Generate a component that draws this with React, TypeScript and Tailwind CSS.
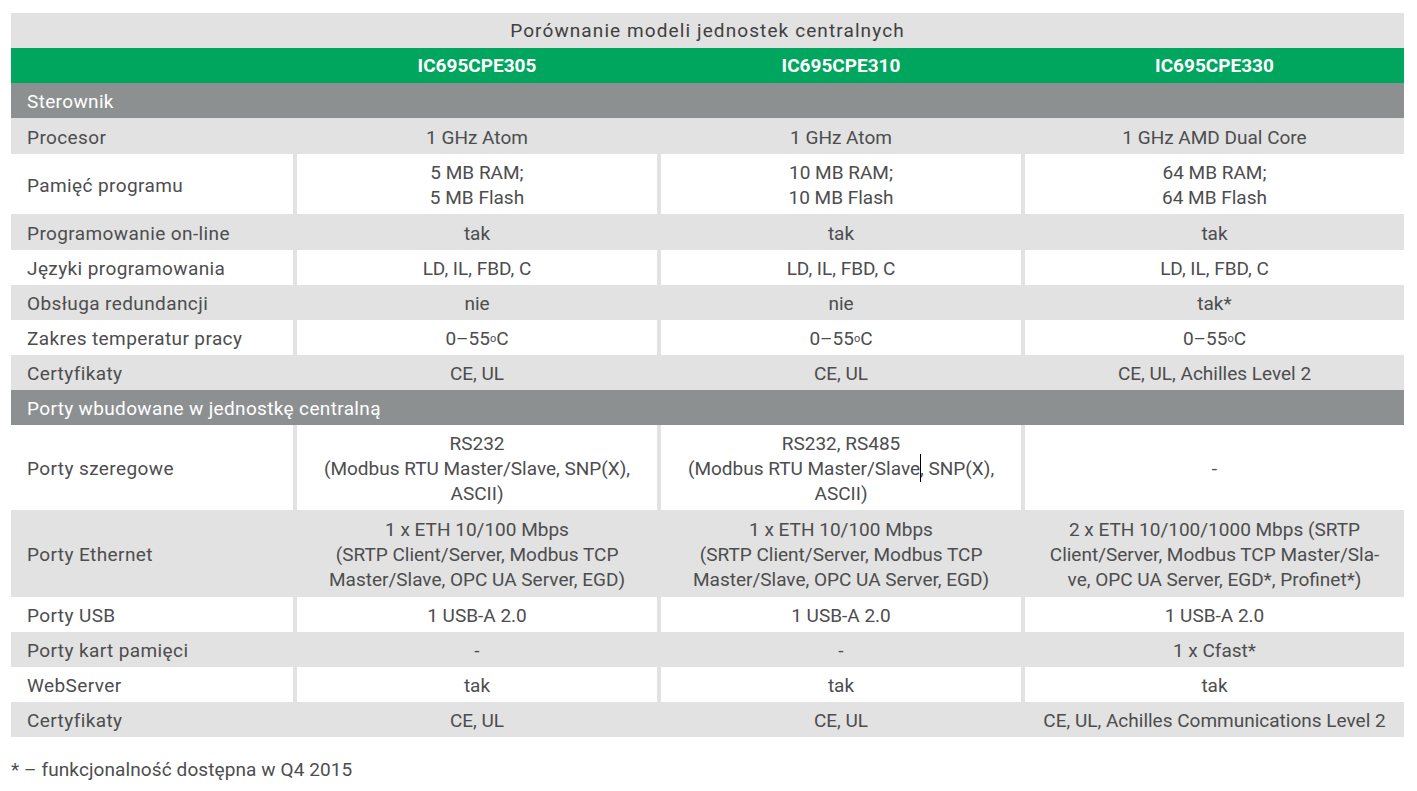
import type { ReactNode } from "react";

// ─── Table data ──────────────────────────────────────────────────────────────
type Row =
  | { kind: "section"; label: string }
  | { kind: "data"; label: string; cells: ReactNode[]; tall?: string };

const Caret = () => (
  <span className="relative">
    <span className="absolute left-0 -top-[3px] w-px h-[28px] bg-black" />
  </span>
);

const rows: Row[] = [
  { kind: "section", label: "Sterownik" },
  { kind: "data", label: "Procesor", cells: ["1 GHz Atom", "1 GHz Atom", "1 GHz AMD Dual Core"], tall: "min-h-[36px]" },
  {
    kind: "data",
    label: "Pamięć programu",
    cells: [
      <>5 MB RAM;<br />5 MB Flash</>,
      <>10 MB RAM;<br />10 MB Flash</>,
      <>64 MB RAM;<br />64 MB Flash</>,
    ],
  },
  { kind: "data", label: "Programowanie on-line", cells: ["tak", "tak", "tak"], tall: "min-h-[36px]" },
  { kind: "data", label: "Języki programowania", cells: ["LD, IL, FBD, C", "LD, IL, FBD, C", "LD, IL, FBD, C"] },
  { kind: "data", label: "Obsługa redundancji", cells: ["nie", "nie", "tak*"] },
  {
    kind: "data",
    label: "Zakres temperatur pracy",
    cells: [0, 1, 2].map((i) => (
      <span key={i}>
        0–55<span className="text-[11px] align-[3px]">o</span>C
      </span>
    )),
  },
  { kind: "data", label: "Certyfikaty", cells: ["CE, UL", "CE, UL", "CE, UL, Achilles Level 2"] },
  { kind: "section", label: "Porty wbudowane w jednostkę centralną" },
  {
    kind: "data",
    label: "Porty szeregowe",
    cells: [
      <>RS232<br />(Modbus RTU Master/Slave, SNP(X),<br />ASCII)</>,
      <>RS232, RS485<br />(Modbus RTU Master/Slave<Caret />, SNP(X),<br />ASCII)</>,
      "-",
    ],
  },
  {
    kind: "data",
    label: "Porty Ethernet",
    tall: "min-h-[87px]",
    cells: [
      <>1 x ETH 10/100 Mbps<br />(SRTP Client/Server, Modbus TCP<br />Master/Slave, OPC UA Server, EGD)</>,
      <>1 x ETH 10/100 Mbps<br />(SRTP Client/Server, Modbus TCP<br />Master/Slave, OPC UA Server, EGD)</>,
      <>2 x ETH 10/100/1000 Mbps (SRTP<br />Client/Server, Modbus TCP Master/Sla-<br />ve, OPC UA Server, EGD*, Profinet*)</>,
    ],
  },
  { kind: "data", label: "Porty USB", cells: ["1 USB-A 2.0", "1 USB-A 2.0", "1 USB-A 2.0"] },
  { kind: "data", label: "Porty kart pamięci", cells: ["-", "-", "1 x Cfast*"] },
  { kind: "data", label: "WebServer", cells: ["tak", "tak", "tak"] },
  { kind: "data", label: "Certyfikaty", cells: ["CE, UL", "CE, UL", "CE, UL, Achilles Communications Level 2"] },
];

const models = ["IC695CPE305", "IC695CPE310", "IC695CPE330"];

const gridCols = "grid grid-cols-[282px_360px_360px_379px] gap-x-1";

// ─── Main component ──────────────────────────────────────────────────────────
export default function App() {
  let dataIdx = 0;

  return (
    <div
      className="min-h-screen bg-white pt-[13px] pl-[11px] text-[19px] text-[#4d4d4f]"
      style={{ fontFamily: "Roboto, 'Noto Sans', sans-serif" }}
    >
      <div className="w-[1393px]">
        {/* Title */}
        <div className="bg-[#e1e2e1] h-[35px] pt-[2px] flex items-center justify-center text-[#404041] tracking-[1.1px]">
          Porównanie modeli jednostek centralnych
        </div>

        {/* Model header */}
        <div className={`${gridCols} bg-[#00a55e] h-[35px] pt-[2px] items-center text-white font-bold`}>
          <div />
          {models.map((m) => (
            <div key={m} className="text-center">
              {m}
            </div>
          ))}
        </div>

        {/* Body */}
        {rows.map((row, i) => {
          if (row.kind === "section") {
            return (
              <div
                key={i}
                className="bg-[#8d9091] h-[35px] pt-[3px] flex items-center pl-4 text-white tracking-[0.35px]"
              >
                {row.label}
              </div>
            );
          }
          const gray = dataIdx++ % 2 === 0;
          const cell = gray ? "" : "bg-white";
          return (
            <div key={i} className={`${gridCols} bg-[#e1e2e1] leading-[25px] ${row.tall ?? ""}`}>
              <div className={`${cell} flex items-center pl-4 pt-[6px] pb-[4px] tracking-[0.4px]`}>
                {row.label}
              </div>
              {row.cells.map((c, j) => (
                <div
                  key={j}
                  className={`${cell} flex items-center justify-center text-center pt-[6px] pb-[4px]`}
                >
                  <div>{c}</div>
                </div>
              ))}
            </div>
          );
        })}

        {/* Footnote */}
        <div className="mt-5 leading-[25px] tracking-[0.1px]">* – funkcjonalność dostępna w Q4 2015</div>
      </div>
    </div>
  );
}
